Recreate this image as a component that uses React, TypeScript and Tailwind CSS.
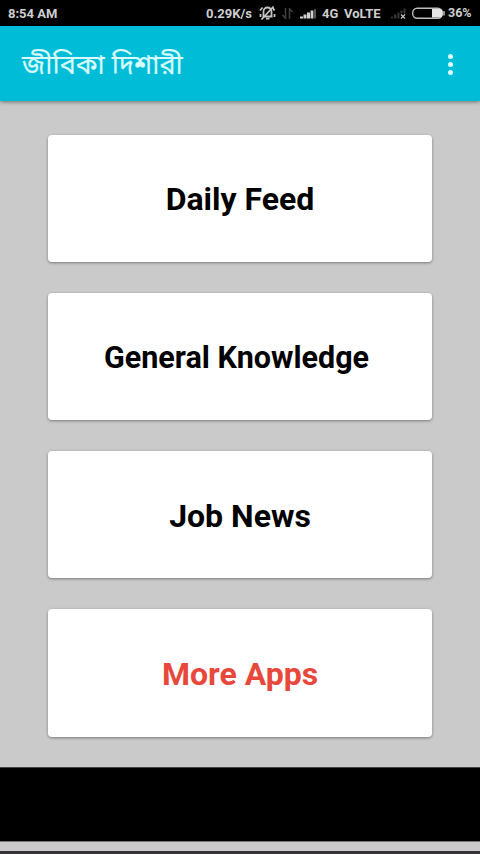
const menuItems = [
  { title: "Daily Feed", style: "text-black text-[32px]" },
  { title: "General Knowledge", style: "text-black text-[30.5px] pr-[7px]" },
  { title: "Job News", style: "text-black text-[32px]" },
  { title: "More Apps", style: "text-[#e8483c] text-[32px]" },
];

const StatusIcons = () => {
  return (
    <svg className="h-[26px] w-[60px] shrink-0" viewBox="259 0 60 26" fill="none">
      {/* muted bell */}
      <g stroke="#c4c4c4" strokeWidth="1.8">
        <path d="M262.5 16.5h10M263.5 16V11.5a4 4 0 0 1 8 0V16" />
        <path d="M266 18.7h3.5M260 10.5l2.5-3M274.5 10.5l-2-3M260.5 14v3M274.5 14v3" />
        <path d="M261.5 19.5L273.5 6.5" />
      </g>
      {/* data arrows */}
      <path d="M285.5 8v11M285.8 18.5l-3.3-3.5M289.5 19V8M289.2 8.5l3.3 3.5" stroke="#404040" strokeWidth="1.5" />
      {/* signal */}
      <path d="M300 18.5v-2h3v2zM303.5 18.5v-4h3v4zM307 18.5v-6h3v6zM310.6 18.5v-8h2.8v8z" fill="#cfcfcf" />
      <path d="M314 18.5V9h2v9.5z" fill="#555" />
    </svg>
  );
};

const Battery = () => {
  return (
    <svg className="h-[26px] w-[56px] shrink-0" viewBox="390 0 56 26" fill="none">
      <path d="M391 18.5v-2h2v2zM394 18.5v-4h2.5v4zM397.5 18.5v-6h2v6zM400.5 13.5v-3h2v3zM403.5 13.5V8.5h2v5z" fill="#353535" />
      <path d="M401 14.5l4 4M405 14.5l-4 4" stroke="#c4c4c4" strokeWidth="1.2" />
      <rect x="412.7" y="8.2" width="29.6" height="10" rx="4.5" stroke="#bdbdbd" strokeWidth="1.4" />
      <path d="M432 9h7.5a3 3 0 0 1 3 3v2.4a3 3 0 0 1-3 3H432z" fill="#e4e4e4" />
      <path d="M444 11v4.5" stroke="#bdbdbd" strokeWidth="1.5" />
    </svg>
  );
};

const StatusBar = () => {
  return (
    <div className="flex h-[26px] items-center whitespace-nowrap bg-black pl-2 text-[13px] font-bold leading-none text-[#cecece]">
      <span className="w-[198px] pt-px">8:54 AM</span>
      <span className="w-[53px] pt-px">0.29K/s</span>
      <StatusIcons />
      <span className="ml-[3px] w-[22px] pt-px">4G</span>
      <span className="w-[46px] pt-px">VoLTE</span>
      <Battery />
      <span className="ml-[2px] pt-px text-[12.5px]">36%</span>
    </div>
  );
};

const Toolbar = () => {
  return (
    <div className="relative flex h-[75px] items-center justify-between bg-[#00bcd7] pl-[22px] pr-[27px] shadow-[0_1px_4px_rgba(0,0,0,0.45)]">
      <h1 className="pt-[7px] font-['Noto_Sans_Bengali','Noto_Sans',sans-serif] text-[27px] font-normal leading-none text-[#d8fbff] [-webkit-text-stroke:0.2px_#d8fbff]">
        জীবিকা দিশারী
      </h1>
      <button className="flex flex-col gap-[3px] pt-px">
        <span className="size-[5px] rounded-full bg-[#d8fbff]" />
        <span className="size-[5px] rounded-full bg-[#d8fbff]" />
        <span className="size-[5px] rounded-full bg-[#d8fbff]" />
      </button>
    </div>
  );
};

const App = () => {
  return (
    <div className="flex h-[854px] w-[480px] flex-col overflow-hidden bg-[#cacaca] font-[Roboto,sans-serif]">
      <StatusBar />
      <Toolbar />
      <div className="flex h-[666px] flex-col gap-[30.7px] px-12 pt-[33.5px]">
        {menuItems.map((item) => (
          <button
            className={`flex h-[127.5px] shrink-0 items-center justify-center rounded-[4px] bg-white pt-[2px] font-bold shadow-[0_1px_3px_rgba(0,0,0,0.4)] ${item.style}`}
            key={item.title}>
            {item.title}
          </button>
        ))}
      </div>
      <div className="h-[74px] border-t border-[#444] bg-black" />
      <div className="h-[10px] border-t border-[#777] bg-[#cacaca]" />
      <div className="h-[3px] bg-[#353335]" />
    </div>
  );
};

export default App;
